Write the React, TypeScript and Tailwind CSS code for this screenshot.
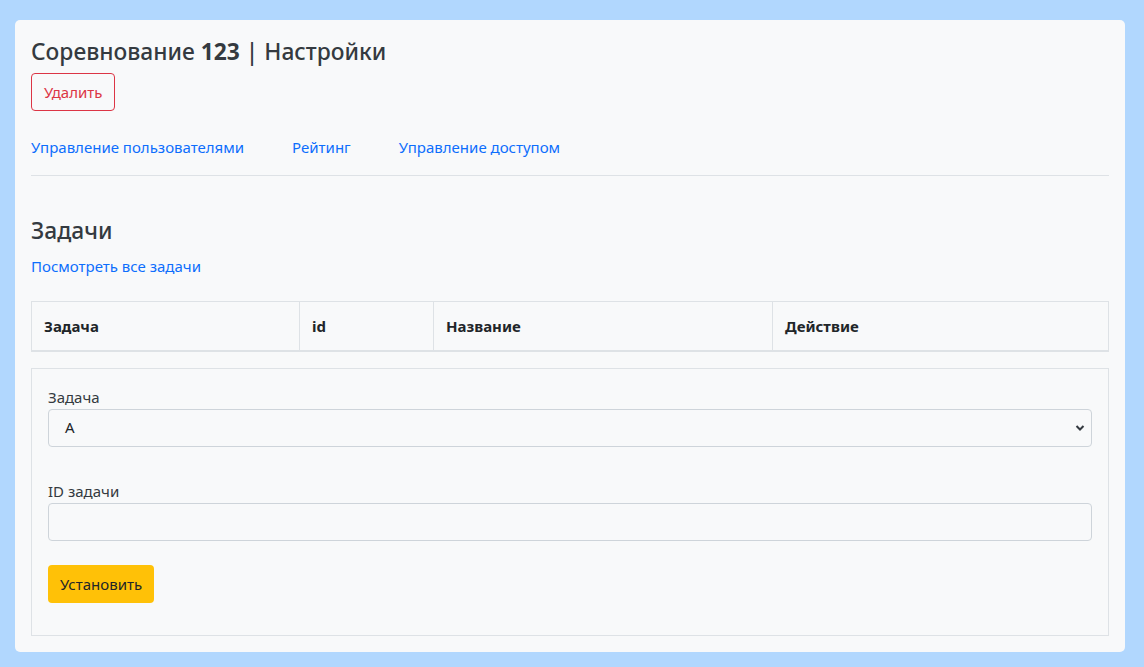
import React from "react";

export default function App() {
  const font = { fontFamily: '"Noto Sans", "Open Sans", sans-serif' };
  return (
    <div className="min-h-[667px] w-full bg-[#b1d7fe] pl-[15px] pr-[19px] pt-[20px] pb-[15px]" style={font}>
      <div className="rounded-[5px] bg-[#f8f9fa] p-4 text-[#212529]">
        <h4 className="text-[22.8px] leading-[28.8px] font-medium text-[#343a40] mt-[2px] mb-[6px]">
          Соревнование <span className="font-bold">123</span> | Настройки
        </h4>
        <button className="h-[38px] rounded-[4px] border border-[#dc3545] px-3 text-[15px] leading-6 text-[#dc3545]">
          Удалить
        </button>
        <nav className="mt-[16px] flex gap-[48px] py-2 text-[15px] leading-6 text-[#0d6efd]">
          <a>Управление пользователями</a>
          <a>Рейтинг</a>
          <a>Управление доступом</a>
        </nav>
        <hr className="mt-2 border-0 border-t border-[#dee2e6]" />
        <h4 className="mt-[41px] text-[22.8px] leading-[28.8px] font-medium text-[#343a40]">Задачи</h4>
        <a className="mt-2 block text-[15px] leading-6 text-[#0d6efd]">Посмотреть все задачи</a>
        <table className="mt-[23px] w-full border-collapse text-left text-[15px] leading-6 text-[#212529]">
          <thead>
            <tr className="border border-b-2 border-[#dee2e6]">
              <th className="w-[268px] border-r border-[#dee2e6] px-3 py-3 font-bold">Задача</th>
              <th className="w-[134px] border-r border-[#dee2e6] px-3 py-3 font-bold">id</th>
              <th className="w-[339px] border-r border-[#dee2e6] px-3 py-3 font-bold">Название</th>
              <th className="px-3 py-3 font-bold">Действие</th>
            </tr>
          </thead>
        </table>
        <div className="mt-4 border border-[#dee2e6] px-4 pt-4 pb-8">
          <label className="block text-[15px] leading-6 text-[#343a40]">Задача</label>
          <div className="relative flex h-[38px] items-center rounded-[4px] border border-[#ced4da] bg-[#f8f9fa] pl-4 text-[15px] text-[#212529]">
            A
            <svg className="absolute right-[6px] top-[14px]" width="10" height="8" viewBox="0 0 10 8">
              <path d="M1.5 2 L5 5.5 L8.5 2" fill="none" stroke="#343a40" strokeWidth="2" />
            </svg>
          </div>
          <label className="mt-[32px] block text-[15px] leading-6 text-[#343a40]">ID задачи</label>
          <div className="h-[38px] rounded-[4px] border border-[#ced4da] bg-[#f8f9fa]" />
          <button className="mt-6 h-[38px] rounded-[4px] bg-[#ffc107] px-3 text-[15px] leading-6 text-[#212529]">
            Установить
          </button>
        </div>
      </div>
    </div>
  );
}
